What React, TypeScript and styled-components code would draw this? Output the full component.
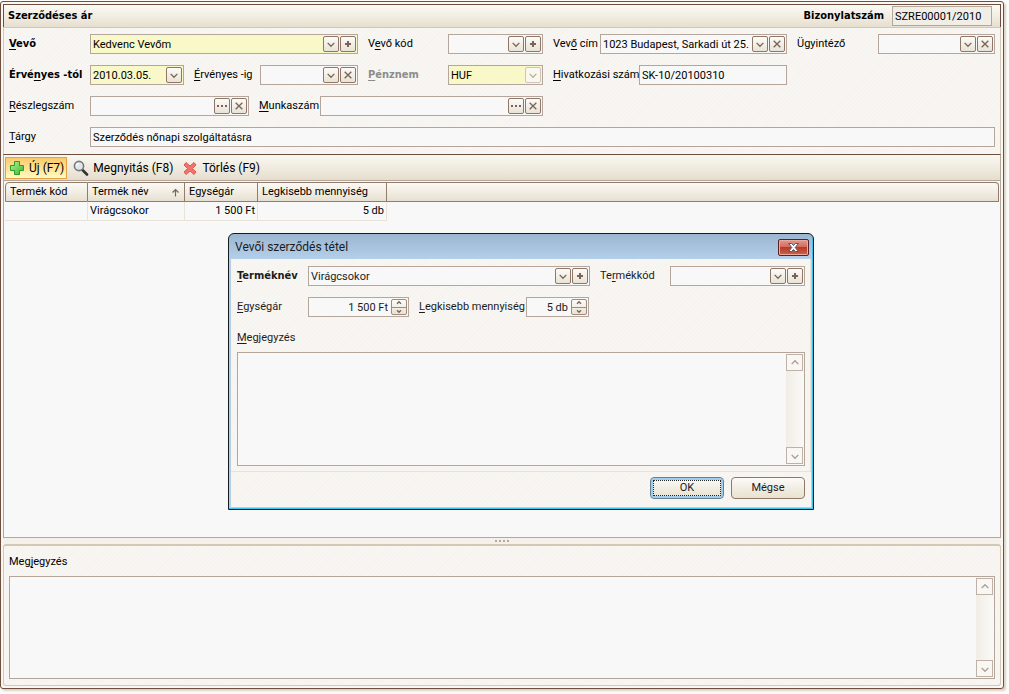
import React from "react";
import styled, { createGlobalStyle, css } from "styled-components";

const c = {
  frame: "#6f4e3e",
  line: "#b5a69c",
  soft: "#d3c7b6",
  pale: "#e8e2d8",
  field: "#f8f8f8",
  yellow: "#f8f8c8",
  glyph: "#7b6457",
};

const font = `Roboto, "Noto Sans", sans-serif`;
const boldFont = `"DejaVu Sans Condensed", "Noto Sans", sans-serif`;

const hatch = css`
  background: repeating-linear-gradient(135deg, #f8f6f2 0 2px, #f6f3ee 2px 3px);
`;

const Global = createGlobalStyle`
  *, *::before, *::after { box-sizing: border-box; }
  body { margin: 0; background: #fdfcf9; color: #000; font: 11px/14px ${font}; }
  input, button, textarea { font: inherit; color: inherit; margin: 0; }
  u { text-underline-offset: 2px; }
`;

const Page = styled.div`
  display: flex;
  min-height: 100vh;
  padding: 1px 5px 5px 0;
`;

const Window = styled.main`
  position: relative;
  display: flex;
  flex: 1;
  flex-direction: column;
  min-width: 0;
  padding: 2px;
  border: 1px solid ${c.frame};
  border-radius: 3px;
  background: #faf7f2;
  box-shadow: 2px 2px 2px #d9d2c8;
`;

const Header = styled.header`
  display: flex;
  align-items: center;
  justify-content: space-between;
  height: 23px;
  padding: 0 8px 0 4px;
  border: solid ${c.frame};
  border-width: 1px 1px 0 1px;
  background: linear-gradient(#fbfaf6, #f1ede2 50%, #e6dfce);
`;

const Title = styled.h1`
  margin: 0;
  font: bold 11px/14px ${boldFont};
`;

const DocNumber = styled.div`
  display: flex;
  align-items: center;
  gap: 8px;
  font: bold 11px/14px ${boldFont};
`;

const DocInput = styled.input`
  width: 100px;
  height: 20px;
  padding: 0 2px;
  border: 1px solid ${c.line};
  background: #f0eee6;
  && { font: 11px/14px ${font}; }
`;

const Form = styled.form`
  display: grid;
  grid-template-columns: minmax(0, 349fr) minmax(0, 175fr) minmax(0, 234fr) minmax(0, 198fr);
  gap: 11px 10px;
  padding: 6px 5px 7px;
  border: 1px solid ${c.soft};
  border-bottom: 0;
  ${hatch}
`;

const Group = styled.div<{ $span?: number }>`
  display: flex;
  align-items: center;
  gap: 10px;
  min-width: 0;
  grid-column: span ${(p) => p.$span ?? 1};
`;

const Label = styled.label<{ $w?: number; $strong?: boolean; $muted?: boolean }>`
  flex: none;
  width: ${(p) => (p.$w ? `${p.$w}px` : "auto")};
  font-weight: ${(p) => (p.$strong ? "bold" : "normal")};
  font-family: ${(p) => (p.$strong ? boldFont : font)};
  color: ${(p) => (p.$muted ? "#8c8c8c" : "inherit")};
  white-space: nowrap;
`;

const Pair = styled.div<{ $w?: number }>`
  display: flex;
  align-items: center;
  flex: ${(p) => (p.$w ? `0 0 ${p.$w}px` : "1 1 0")};
  min-width: 0;
`;

const Box = styled.div<{ $yellow?: boolean }>`
  display: flex;
  flex: 1;
  align-items: center;
  gap: 1px;
  min-width: 0;
  height: 20px;
  padding-right: 1px;
  border: 1px solid ${c.line};
  background: ${(p) => (p.$yellow ? c.yellow : c.field)};
`;

const Input = styled.input<{ $right?: boolean }>`
  flex: 1;
  min-width: 0;
  width: 0;
  height: 18px;
  padding: 0 ${(p) => (p.$right ? "2px" : "0")} 0 2px;
  border: 0;
  outline: 0;
  background: transparent;
  text-align: ${(p) => (p.$right ? "right" : "left")};
`;

const MiniButton = styled.button`
  display: grid;
  place-items: center;
  flex: none;
  width: 16px;
  height: 16px;
  padding: 0;
  border: 1px solid #8f7668;
  border-radius: 2px;
  background: linear-gradient(#fcfbf8, #e9e3d5);
  color: ${c.glyph};
  &:disabled { border-color: #cdc5bd; background: #f8f8ee; color: #b9afa6; }
`;

const Spin = styled.span`
  display: flex;
  flex-direction: column;
  flex: none;
  width: 16px;
  height: 16px;
  border: 1px solid #a08b7e;
  border-radius: 2px;
  background: linear-gradient(#fcfbf8, #e9e3d5);
`;

const SpinButton = styled.button`
  display: grid;
  place-items: center;
  flex: 1;
  padding: 0;
  border: 0;
  background: transparent;
  color: ${c.glyph};
  & + & { border-top: 1px solid #a08b7e; }
`;

const Toolbar = styled.div`
  display: flex;
  align-items: center;
  gap: 2px;
  height: 27px;
  padding: 1px;
  border: 1px solid ${c.line};
  border-top-color: ${c.frame};
  background: linear-gradient(#faf8f3, #f0ebe0 50%, #e5decd);
`;

const ToolButton = styled.button<{ $on?: boolean }>`
  display: flex;
  align-items: center;
  gap: 4px;
  height: 22px;
  padding: 0 2px 0 3px;
  border: 1px solid ${(p) => (p.$on ? "#e5a044" : "transparent")};
  background: ${(p) => (p.$on ? "linear-gradient(#fbc96a, #fde08c 45%, #fffbc4)" : "transparent")};
  && { font: 12px/14px ${font}; }
`;

const GridArea = styled.section`
  flex: 1;
  min-height: 340px;
  padding: 1px 1px 0;
  border: 1px solid ${c.line};
  border-top: 0;
  background: ${c.field};
`;

const Table = styled.table`
  width: 100%;
  table-layout: fixed;
  border-collapse: separate;
  border-spacing: 0;
`;

const Th = styled.th`
  height: 20px;
  padding: 0 4px;
  border: solid #937b6d;
  border-width: 1px 1px 1px 0;
  background: linear-gradient(#fbf9f5, #f2eee4 50%, #e7e0d1);
  font-weight: normal;
  text-align: left;
  white-space: nowrap;
  &:first-child { border-left-width: 1px; border-top-left-radius: 4px; }
  &:last-child { border-top-right-radius: 4px; }
`;

const ThInner = styled.span`
  display: flex;
  align-items: center;
  justify-content: space-between;
  svg { color: ${c.glyph}; }
`;

const Td = styled.td<{ $right?: boolean }>`
  height: 19px;
  padding: 0 2px;
  border: solid ${c.pale};
  border-width: 0 1px 1px 0;
  text-align: ${(p) => (p.$right ? "right" : "left")};
  white-space: nowrap;
  &:last-child { border: 0; }
`;

const Splitter = styled.div`
  display: flex;
  align-items: center;
  justify-content: center;
  gap: 2px;
  height: 6px;
  background: #f5f1ea;
`;

const Dot = styled.i`
  width: 2px;
  height: 2px;
  background: #b5a996;
`;

const NotePanel = styled.section`
  padding: 9px 5px 6px;
  border: 1px solid ${c.soft};
  border-top-width: 2px;
  border-radius: 3px;
  ${hatch}
`;

const NoteLabel = styled(Label)`
  display: block;
`;

const NoteBox = styled.div<{ $h: number }>`
  display: flex;
  height: ${(p) => p.$h}px;
  margin-top: 7px;
  padding: 1px;
  border: 1px solid ${c.line};
  background: ${c.field};
`;

const NoteText = styled.textarea`
  flex: 1;
  min-width: 0;
  padding: 2px;
  border: 0;
  outline: 0;
  resize: none;
  overflow: hidden;
  background: transparent;
`;

const Scroll = styled.div`
  display: flex;
  flex-direction: column;
  justify-content: space-between;
  width: 17px;
  background: linear-gradient(90deg, #f1ede6, #faf9f7);
`;

const ScrollButton = styled.button`
  display: grid;
  place-items: center;
  width: 17px;
  height: 17px;
  padding: 0;
  border: 1px solid #bfb1a8;
  background: #f8f7f4;
  color: #aa9c91;
`;

const Dialog = styled.section`
  position: absolute;
  top: 231px;
  left: 227px;
  width: 586px;
  padding: 1px 2px 2px;
  border: 1px solid #151b1e;
  border-radius: 6px 6px 0 0;
  background: linear-gradient(#9ab6d0, #b4cfea 25px);
  box-shadow: inset -1px -1px #3cc4ea;
  color: #1c1c1c;
`;

const DialogBar = styled.header`
  display: flex;
  align-items: center;
  justify-content: space-between;
  height: 24px;
  padding: 0 2px 0 4px;
`;

const DialogTitle = styled.h2`
  margin: 0;
  font: 12px/14px ${font};
`;

const Close = styled.button`
  display: grid;
  place-items: center;
  width: 31px;
  height: 17px;
  padding: 0;
  border: 1px solid #5b2028;
  border-radius: 2px;
  background: linear-gradient(#e29a8e, #d4695a 48%, #b93a28 50%, #cf6248);
  box-shadow: inset 0 0 0 1px #e9aaa0;
`;

const DialogBody = styled.div`
  ${hatch}
`;

const DialogForm = styled.div`
  display: flex;
  flex-direction: column;
  gap: 11px;
  padding: 7px 5px 5px 6px;
  border: solid ${c.pale};
  border-width: 0 1px 1px 0;
`;

const DialogNote = styled.div`
  padding-top: 3px;
`;

const Actions = styled.footer`
  display: flex;
  justify-content: flex-end;
  gap: 7px;
  padding: 5px 6px 8px;
`;

const Push = styled.button<{ $focus?: boolean }>`
  width: 74px;
  height: 22px;
  padding: 0;
  border: 1px solid #8d7869;
  border-radius: 4px;
  background: linear-gradient(#fcfbf8, #f1ede3 50%, #e9e2d0);
  ${(p) =>
    p.$focus &&
    css`
      border-color: #6c7f8c;
      box-shadow: inset 0 0 0 2px #9fcdf0;
      outline: 1px dotted #222;
      outline-offset: -4px;
    `}
`;

const paths = {
  down: "M1 3 L4 6 L7 3",
  up: "M1 5 L4 2 L7 5",
  x: "M1 1 L7 7 M7 1 L1 7",
  sort: "M1 4 L4 1 L7 4 M4 1 V8",
};

const Stroke = ({ d, size = 10, weight = 1.2 }: { d: string; size?: number; weight?: number }) => (
  <svg width={size} height={size} viewBox="-0.5 -0.5 9 9" fill="none" stroke="currentColor" strokeWidth={weight} aria-hidden="true">
    <path d={d} />
  </svg>
);

const Plus = () => (
  <svg width="8" height="8" viewBox="0 0 8 8" fill="currentColor" aria-hidden="true">
    <path d="M3 1h2v2h2v2H5v2H3V5H1V3h2z" />
  </svg>
);

const Dots = () => (
  <svg width="10" height="10" viewBox="0 0 10 10" fill="currentColor" aria-hidden="true">
    <path d="M0 4h2v2H0zM4 4h2v2H4zM8 4h2v2H8z" />
  </svg>
);

type Kind = "down" | "plus" | "x" | "dots";
const names: Record<Kind, string> = { down: "Lista", plus: "Hozzáadás", x: "Törlés", dots: "Tallózás" };

const Mini = ({ kind, disabled }: { kind: Kind; disabled?: boolean }) => (
  <MiniButton type="button" aria-label={names[kind]} disabled={disabled}>
    {kind === "plus" ? <Plus /> : kind === "dots" ? <Dots /> : <Stroke d={paths[kind]} />}
  </MiniButton>
);

type FieldProps = {
  id: string;
  label: React.ReactNode;
  labelWidth: number;
  value?: string;
  kinds?: Kind[];
  width?: number;
  yellow?: boolean;
  strong?: boolean;
  muted?: boolean;
  spin?: boolean;
};

const Field = ({ id, label, labelWidth, value = "", kinds = [], width, yellow, strong, muted, spin }: FieldProps) => (
  <Pair $w={width}>
    <Label htmlFor={id} $w={labelWidth} $strong={strong} $muted={muted}>
      {label}
    </Label>
    <Box $yellow={yellow}>
      <Input id={id} defaultValue={value} $right={spin} />
      {kinds.map((k) => (
        <Mini key={k} kind={k} disabled={muted} />
      ))}
      {spin && (
        <Spin>
          <SpinButton type="button" aria-label="Növelés">
            <Stroke d={paths.up} size={6} weight={2} />
          </SpinButton>
          <SpinButton type="button" aria-label="Csökkentés">
            <Stroke d={paths.down} size={6} weight={2} />
          </SpinButton>
        </Spin>
      )}
    </Box>
  </Pair>
);

const Note = ({ id, height, label }: { id: string; height: number; label: React.ReactNode }) => (
  <div>
    <NoteLabel htmlFor={id}>{label}</NoteLabel>
    <NoteBox $h={height}>
      <NoteText id={id} />
      <Scroll>
        <ScrollButton type="button" aria-label="Fel">
          <Stroke d={paths.up} />
        </ScrollButton>
        <ScrollButton type="button" aria-label="Le">
          <Stroke d={paths.down} />
        </ScrollButton>
      </Scroll>
    </NoteBox>
  </div>
);

const AddIcon = () => (
  <svg width="16" height="16" viewBox="0 0 16 16" aria-hidden="true">
    <defs>
      <linearGradient id="green" x1="0" y1="0" x2="1" y2="1">
        <stop offset="0" stopColor="#b4f59a" />
        <stop offset="1" stopColor="#35b52c" />
      </linearGradient>
    </defs>
    <path d="M5.5 1.5h5v4h4v5h-4v4h-5v-4h-4v-5h4z" fill="url(#green)" stroke="#2f9a2b" />
  </svg>
);

const SearchIcon = () => (
  <svg width="16" height="16" viewBox="0 0 16 16" aria-hidden="true">
    <path d="M9.500 10l4.500 4.500" stroke="#333" strokeWidth="2.600" strokeLinecap="round" />
    <circle cx="6" cy="6" r="4.600" fill="#dfe7ec" stroke="#77797b" strokeWidth="1.600" />
    <path d="M3.500 6a2.500 2.500 0 0 1 2.500-2.500" fill="none" stroke="#fff" strokeWidth="1.200" />
  </svg>
);

const DeleteIcon = () => (
  <svg width="16" height="16" viewBox="0 0 16 16" aria-hidden="true">
    <path d="M4 2.500L8 6l4-3.500L14 5l-3.500 3.500L14 12l-2 2.500L8 11l-4 3.500L2 12l3.500-3.500L2 5z" fill="#f4716c" stroke="#dc5a56" strokeLinejoin="round" />
  </svg>
);

const CloseIcon = () => (
  <svg width="13" height="11" viewBox="0 0 13 11" aria-hidden="true">
    <path d="M1.500 1.500h3L6.500 3.500l2-2h3l-3.300 4 3.300 4h-3l-2-2-2 2h-3l3.300-4z" fill="#fff" stroke="#5d5560" />
  </svg>
);

export default function App() {
  return (
    <Page>
      <Global />
      <Window>
        <Header>
          <Title>Szerződéses ár</Title>
          <DocNumber>
            <label htmlFor="doc">Bizonylatszám</label>
            <DocInput id="doc" readOnly value="SZRE00001/2010" />
          </DocNumber>
        </Header>

        <Form>
          <Group>
            <Field id="vevo" strong yellow label={<><u>V</u>evő</>} labelWidth={81} value="Kedvenc Vevőm" kinds={["down", "plus"]} />
          </Group>
          <Group>
            <Field id="kod" label={<>V<u>e</u>vő kód</>} labelWidth={80} kinds={["down", "plus"]} />
          </Group>
          <Group>
            <Field id="cim" label={<>Vev<u>ő</u> cím</>} labelWidth={47} value="1023 Budapest, Sarkadi út 25." kinds={["down", "x"]} />
          </Group>
          <Group>
            <Field id="ugy" label="Ügyintéző" labelWidth={81} kinds={["down", "x"]} />
          </Group>

          <Group>
            <Field id="tol" strong yellow label={<>Érvé<u>n</u>yes -tól</>} labelWidth={81} width={175} value="2010.03.05." kinds={["down"]} />
            <Field id="ig" label={<><u>É</u>rvényes -ig</>} labelWidth={66} kinds={["down", "x"]} />
          </Group>
          <Group>
            <Field id="penz" strong muted yellow label={<><u>P</u>énznem</>} labelWidth={80} value="HUF" kinds={["down"]} />
          </Group>
          <Group $span={2}>
            <Field id="hiv" width={234} label={<><u>H</u>ivatkozási szám</>} labelWidth={86} value="SK-10/20100310" />
          </Group>

          <Group $span={2}>
            <Field id="reszleg" label={<><u>R</u>észlegszám</>} labelWidth={81} width={240} kinds={["dots", "x"]} />
            <Field id="munka" label={<><u>M</u>unkaszám</>} labelWidth={61} kinds={["dots", "x"]} />
          </Group>
          <Group $span={2} />

          <Group $span={4}>
            <Field id="targy" label={<><u>T</u>árgy</>} labelWidth={81} value="Szerződés nőnapi szolgáltatásra" />
          </Group>
        </Form>

        <Toolbar role="toolbar">
          <ToolButton type="button" $on><AddIcon />Új (F7)</ToolButton>
          <ToolButton type="button"><SearchIcon />Megnyitás (F8)</ToolButton>
          <ToolButton type="button"><DeleteIcon />Törlés (F9)</ToolButton>
        </Toolbar>

        <GridArea>
          <Table>
            <colgroup>
              <col width="83" />
              <col width="97" />
              <col width="73" />
              <col width="129" />
              <col />
            </colgroup>
            <thead>
              <tr>
                <Th>Termék kód</Th>
                <Th><ThInner>Termék név<Stroke d={paths.sort} size={9} /></ThInner></Th>
                <Th>Egységár</Th>
                <Th>Legkisebb mennyiség</Th>
                <Th aria-hidden="true" />
              </tr>
            </thead>
            <tbody>
              <tr>
                <Td />
                <Td>Virágcsokor</Td>
                <Td $right>1 500 Ft</Td>
                <Td $right>5 db</Td>
                <Td />
              </tr>
            </tbody>
          </Table>
        </GridArea>

        <Splitter>
          <Dot /><Dot /><Dot /><Dot />
        </Splitter>

        <NotePanel>
          <Note id="note" height={103} label={<>Meg<u>j</u>egyzés</>} />
        </NotePanel>

        <Dialog role="dialog" aria-labelledby="dlg">
          <DialogBar>
            <DialogTitle id="dlg">Vevői szerződés tétel</DialogTitle>
            <Close type="button" aria-label="Bezárás"><CloseIcon /></Close>
          </DialogBar>
          <DialogBody>
            <DialogForm>
              <Group>
                <Field id="tnev" strong label={<><u>T</u>erméknév</>} labelWidth={71} value="Virágcsokor" kinds={["down", "plus"]} />
                <Field id="tkod" label={<>Te<u>r</u>mékkód</>} labelWidth={70} width={205} kinds={["down", "plus"]} />
              </Group>
              <Group>
                <Field id="ear" spin label={<><u>E</u>gységár</>} labelWidth={71} width={172} value="1 500 Ft" />
                <Field id="min" spin label={<><u>L</u>egkisebb mennyiség</>} labelWidth={107} width={170} value="5 db" />
              </Group>
              <DialogNote>
                <Note id="dnote" height={114} label={<><u>M</u>egjegyzés</>} />
              </DialogNote>
            </DialogForm>
            <Actions>
              <Push type="button" $focus>OK</Push>
              <Push type="button">Mégse</Push>
            </Actions>
          </DialogBody>
        </Dialog>
      </Window>
    </Page>
  );
}
